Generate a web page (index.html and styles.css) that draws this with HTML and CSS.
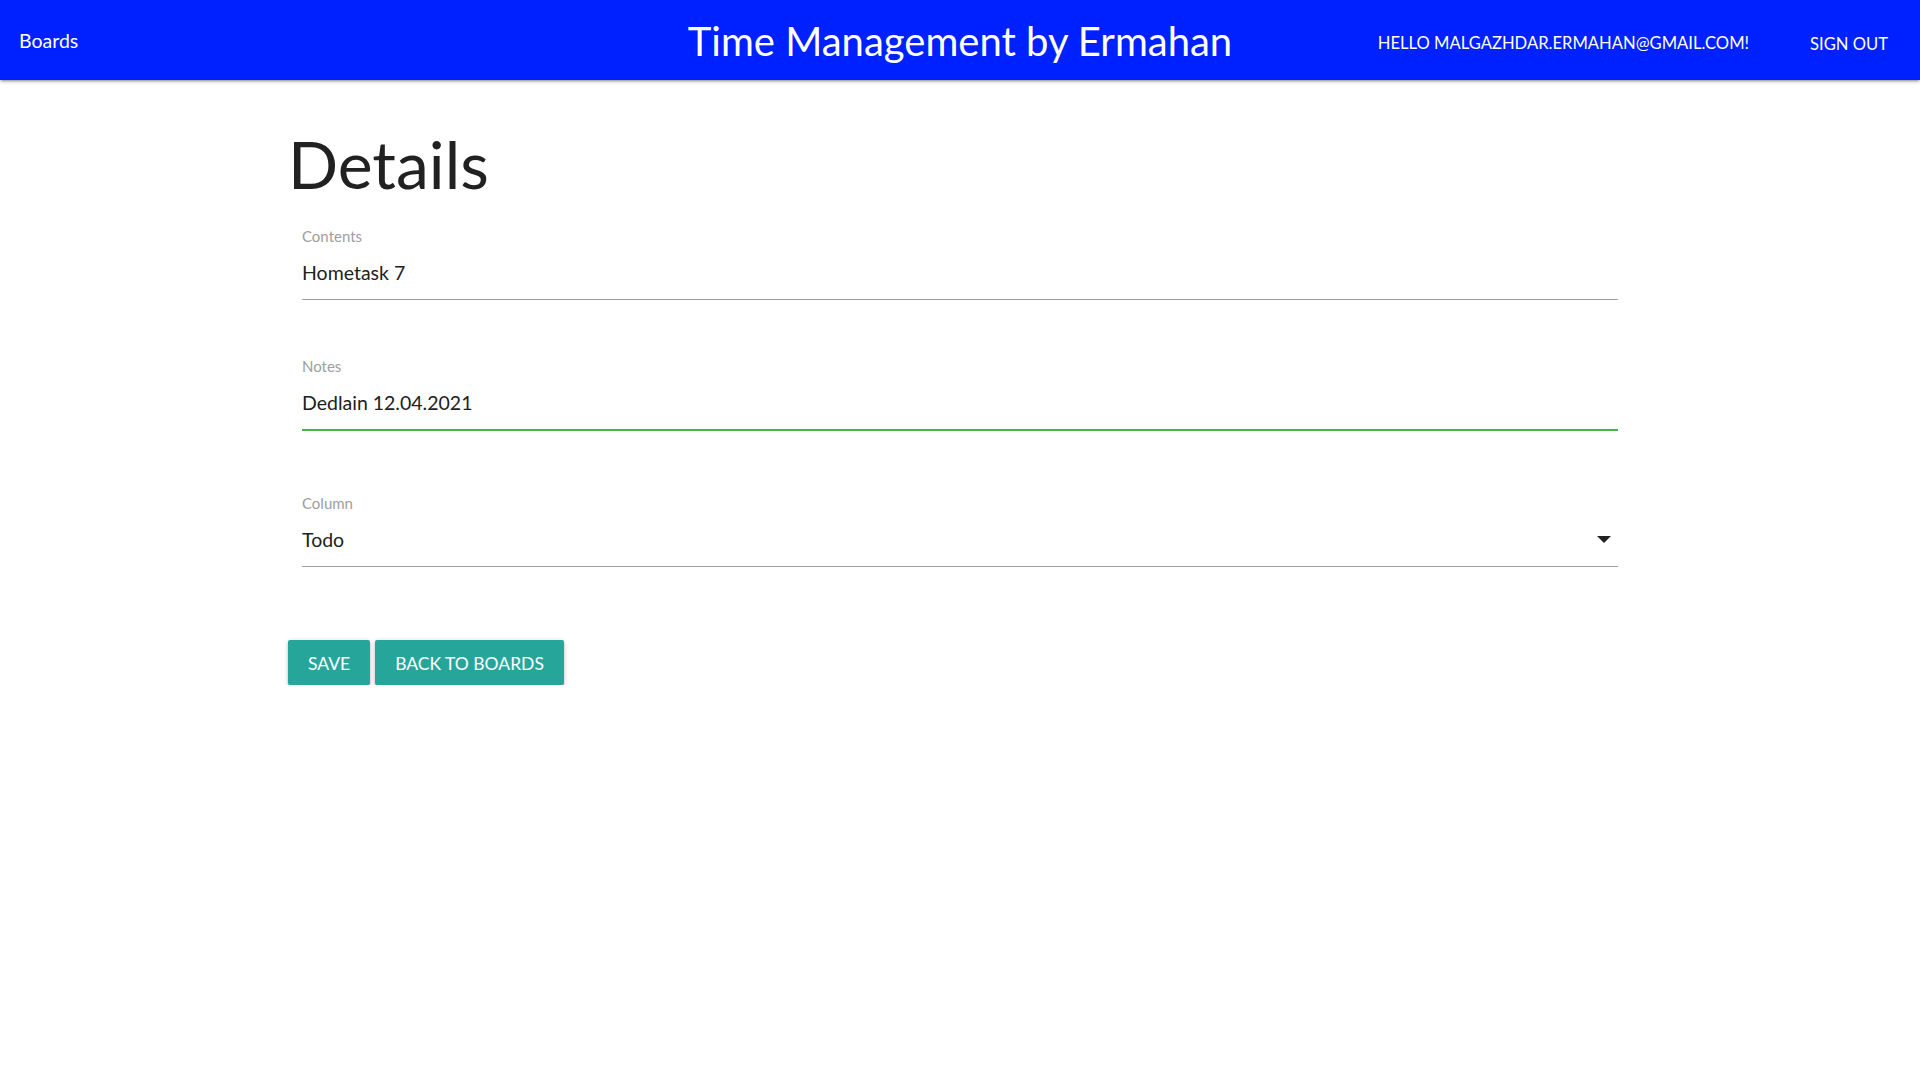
FILE: index.html
```html
<!DOCTYPE html>
<html lang="en">
<head>
<meta charset="utf-8">
<title>Time Management by Ermahan</title>
<link rel="stylesheet" href="styles.css">
</head>
<body>
<header class="nav">
  <div class="nav-left"><a class="nav-link" href="#">Boards</a></div>
  <div class="brand">Time Management by Ermahan</div>
  <div class="nav-right">
    <span class="nav-hello">HELLO MALGAZHDAR.ERMAHAN@GMAIL.COM!</span>
    <a class="nav-link nav-signout" href="#">SIGN OUT</a>
  </div>
</header>
<main class="container">
  <h1 class="title">Details</h1>
  <form class="form">
    <div class="field field-contents">
      <div class="label">Contents</div>
      <div class="value">Hometask 7</div>
    </div>
    <div class="field field-notes">
      <div class="label">Notes</div>
      <div class="value value-valid">Dedlain 12.04.2021</div>
    </div>
    <div class="field field-column">
      <div class="label">Column</div>
      <div class="value value-select">
        <span>Todo</span>
        <svg class="caret" width="14" height="7" viewBox="0 0 14 7"><path d="M0 0H14L7 7Z" fill="#212121"/></svg>
      </div>
    </div>
  </form>
  <div class="actions">
    <button class="btn" type="button">SAVE</button>
    <button class="btn" type="button">BACK TO BOARDS</button>
  </div>
</main>
</body>
</html>
```
FILE: styles.css
```css
* { box-sizing: border-box; }
html, body { margin: 0; padding: 0; }
body {
  font-family: Lato, "Open Sans", sans-serif;
  color: #212121;
  background: #fff;
}
.nav {
  height: 80px;
  background: #0021ff;
  color: #fff;
  display: grid;
  grid-template-columns: 1fr auto 1fr;
  align-items: start;
  box-shadow: 0 2px 2px 0 rgba(0,0,0,.14), 0 3px 1px -2px rgba(0,0,0,.12), 0 1px 5px 0 rgba(0,0,0,.2);
  position: relative;
  z-index: 1;
}
.nav-left { padding-left: 19px; padding-top: 1px; }
.nav-link { color: #fff; text-decoration: none; font-size: 19.5px; line-height: 80px; }
.brand { font-size: 40px; line-height: 82px; white-space: nowrap; }
.nav-right {
  display: flex;
  justify-content: flex-end;
  align-items: flex-start;
  gap: 61px;
  padding-right: 32px;
  padding-top: 3px;
}
.nav-hello { font-size: 16.6px; line-height: 80px; white-space: nowrap; }
.nav-signout { font-size: 16.6px; line-height: 82px; }

.container { width: 70%; margin: 0 auto; padding-top: 44px; }
.title { margin: 0; font-size: 66px; line-height: 80px; font-weight: 400; color: #212121; }
.form { margin-top: 22px; padding: 0 14px 0 14px; }
.field-notes { margin-top: 56px; }
.field-column { margin-top: 63px; }
.label { font-size: 15px; line-height: 20px; color: #9e9e9e; }
.value {
  margin-top: 12px;
  font-size: 19.5px;
  line-height: 30px;
  padding-bottom: 11px;
  border-bottom: 1px solid #9e9e9e;
  color: #212121;
}
.value-valid { border-bottom-color: #4caf50; box-shadow: 0 1px 0 0 #4caf50; }
.value-select { display: flex; justify-content: space-between; align-items: center; }
.caret { margin-right: 7px; margin-top: -1px; }

.actions { margin-top: 73px; display: flex; gap: 5px; }
.btn {
  height: 45px;
  padding: 2px 20px 0;
  border: none;
  border-radius: 2px;
  background: #26a69a;
  color: #fff;
  font-family: Lato, "Open Sans", sans-serif;
  font-size: 17.5px;
  box-shadow: 0 2px 2px 0 rgba(0,0,0,.14), 0 3px 1px -2px rgba(0,0,0,.12), 0 1px 5px 0 rgba(0,0,0,.2);
  cursor: pointer;
}
```
